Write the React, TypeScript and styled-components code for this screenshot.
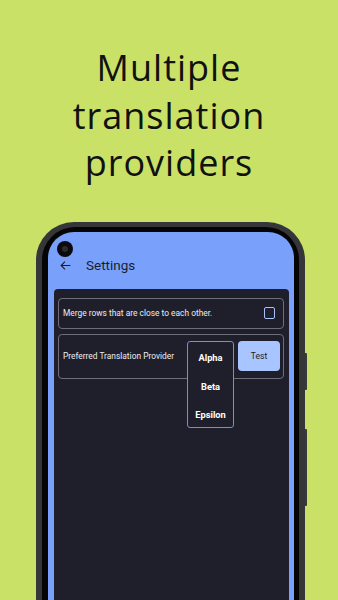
import React from "react";
import styled, { createGlobalStyle } from "styled-components";

const Global = createGlobalStyle`
  html, body { margin: 0; padding: 0; background: #c9e166; }
  body { width: 338px; height: 600px; overflow: hidden; }
  #root { height: 600px; }
`;

const Page = styled.div`
  height: 600px;
  display: flex;
  flex-direction: column;
  background: #c9e166;
  overflow: hidden;
`;

const Headline = styled.h1`
  margin: 0;
  padding-top: 44px;
  font-family: "Open Sans", "Noto Sans", sans-serif;
  font-weight: 400;
  font-size: 36px;
  line-height: 47.5px;
  letter-spacing: 1px;
  text-align: center;
  color: #111;
`;

const PhoneRow = styled.div`
  flex: 1;
  display: flex;
  margin-top: 35px;
  padding-left: 36px;
`;

const Frame = styled.div`
  width: 269px;
  box-sizing: border-box;
  background: #36363a;
  border-radius: 38px 38px 0 0;
  padding: 5px 6px 0 6px;
  display: flex;
`;

const Bezel = styled.div`
  flex: 1;
  display: flex;
  background: #050505;
  border-radius: 33px 33px 0 0;
  padding: 5px 5px 0 6px;
`;

const Screen = styled.div`
  flex: 1;
  position: relative;
  display: flex;
  flex-direction: column;
  background: #79a1fb;
  border-radius: 26px 26px 0 0;
`;

const Camera = styled.div`
  position: absolute;
  left: 9px;
  top: 9px;
  width: 16px;
  height: 16px;
  border-radius: 50%;
  background: #0b0b0d;
  display: flex;
  align-items: center;
  justify-content: center;
  &::after {
    content: "";
    width: 6px;
    height: 6px;
    border-radius: 50%;
    background: #2a2a30;
  }
`;

const Header = styled.div`
  height: 57px;
  display: flex;
  align-items: center;
  padding: 10px 0 0 11px;
  box-sizing: border-box;
  gap: 14px;
`;

const Title = styled.span`
  font-family: Roboto, "Liberation Sans", sans-serif;
  font-size: 13.5px;
  color: #1b1c2b;
`;

const Panel = styled.div`
  flex: 1;
  margin: 0 5px 0 6px;
  background: #1f1f2b;
  border-radius: 4px 4px 0 0;
  padding: 9px 5px 0 4px;
  display: flex;
  flex-direction: column;
  gap: 5px;
`;

const Card = styled.div<{ $h: number }>`
  height: ${(p) => p.$h}px;
  box-sizing: border-box;
  border: 1px solid #6e6e7a;
  border-radius: 4px;
  display: flex;
  align-items: center;
  justify-content: space-between;
  padding: 0 3px 0 4px;
`;

const Label = styled.span`
  font-family: Roboto, "Liberation Sans", sans-serif;
  font-size: 8.4px;
  color: #ececf2;
`;

const Check = styled.div`
  width: 9px;
  height: 10px;
  border: 1.5px solid #a7c1fb;
  border-radius: 2px;
  margin-right: 5px;
`;

const Controls = styled.div`
  display: flex;
  gap: 4px;
  align-items: stretch;
`;

const MenuAnchor = styled.div`
  position: relative;
  width: 46px;
`;

const Menu = styled.div`
  position: absolute;
  top: 0;
  left: -1px;
  width: 47px;
  height: 87px;
  box-sizing: border-box;
  background: #1f1f2b;
  border: 1px solid #6f90da;
  border-radius: 3px;
  display: flex;
  flex-direction: column;
  justify-content: space-between;
  padding: 10px 0 6px;
  z-index: 2;
`;

const MenuItem = styled.div`
  font-family: Roboto, "Liberation Sans", sans-serif;
  font-weight: 700;
  font-size: 9.3px;
  line-height: 12px;
  text-align: center;
  color: #ffffff;
`;

const TestButton = styled.button`
  width: 42px;
  height: 30px;
  border: none;
  border-radius: 4px;
  background: #a9c5ff;
  font-family: Roboto, "Liberation Sans", sans-serif;
  font-size: 8.5px;
  color: #1c1c28;
  padding: 0;
`;

const Rail = styled.div`
  display: flex;
  flex-direction: column;
  padding-top: 131px;
  gap: 39px;
`;

const SideButton = styled.div<{ $h: number }>`
  width: 2px;
  height: ${(p) => p.$h}px;
  background: #3a3a3c;
  border-radius: 0 1px 1px 0;
`;

const BackArrow = () => (
  <svg width="13" height="13" viewBox="0 0 24 24" fill="none">
    <path d="M21 12H4M11 5l-7 7 7 7" stroke="#1b1c2b" strokeWidth="2" />
  </svg>
);

export default function App() {
  return (
    <>
      <Global />
      <Page>
        <Headline>
          Multiple
          <br />
          translation
          <br />
          providers
        </Headline>
        <PhoneRow>
          <Frame>
            <Bezel>
              <Screen>
                <Camera />
                <Header>
                  <BackArrow />
                  <Title>Settings</Title>
                </Header>
                <Panel>
                  <Card $h={31}>
                    <Label>Merge rows that are close to each other.</Label>
                    <Check />
                  </Card>
                  <Card $h={45}>
                    <Label>Preferred Translation Provider</Label>
                    <Controls>
                      <MenuAnchor>
                        <Menu>
                          <MenuItem>Alpha</MenuItem>
                          <MenuItem>Beta</MenuItem>
                          <MenuItem>Epsilon</MenuItem>
                        </Menu>
                      </MenuAnchor>
                      <TestButton>Test</TestButton>
                    </Controls>
                  </Card>
                </Panel>
              </Screen>
            </Bezel>
          </Frame>
          <Rail>
            <SideButton $h={37} />
            <SideButton $h={77} />
          </Rail>
        </PhoneRow>
      </Page>
    </>
  );
}
